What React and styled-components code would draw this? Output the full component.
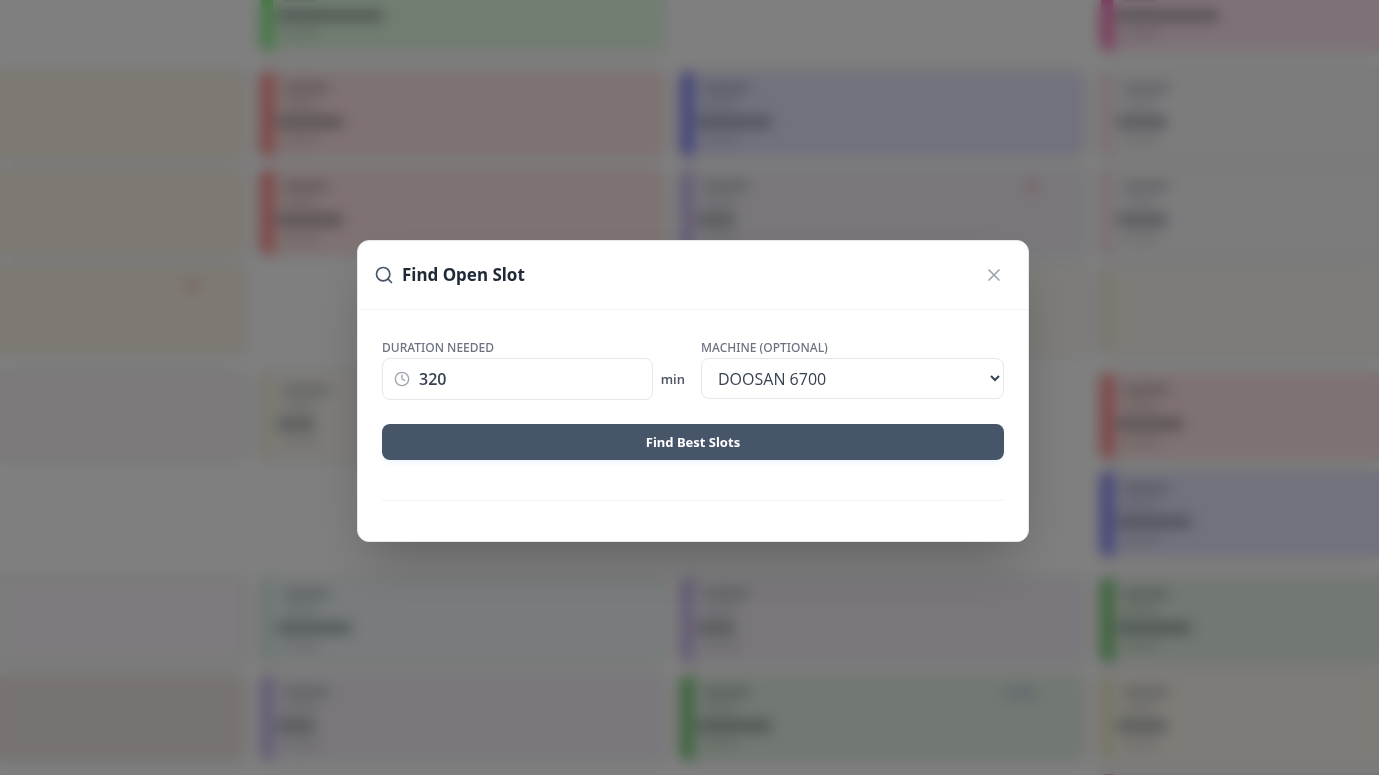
import React from "react";
import styled, { createGlobalStyle } from "styled-components";
import { Search, X, Clock } from "lucide-react";

const GlobalStyle = createGlobalStyle`
  *, *::before, *::after { box-sizing: border-box; }
  body {
    margin: 0;
    background: #ffffff;
    font-family: "Open Sans", "Noto Sans", sans-serif;
  }
`;

const Page = styled.div`
  position: relative;
  height: 100vh;
  overflow: hidden;
`;

/* The schedule behind the dialog, scrolled part of the way right and down. */
const Board = styled.div`
  display: flex;
  gap: 17px;
  margin: -34px 0 0 -159px;
`;

const Lane = styled.div`
  flex: 0 0 403px;
  display: flex;
  flex-direction: column;
  gap: 22px;
`;

const Shift = styled.div`
  display: flex;
  flex-direction: column;
  gap: 14px;
`;

const Card = styled.article`
  height: 84px;
  padding: 12px 28px 0 4px;
  display: flex;
  justify-content: space-between;
  border-radius: 6px;
  background: ${(p) => p.$fill};
  border-left: 12px solid ${(p) => p.$edge};
  box-shadow: 0 0 10px rgba(60, 40, 40, 0.16);
`;

const EmptySlot = styled.div`
  height: 84px;
`;

const Lines = styled.div`
  display: flex;
  flex-direction: column;
  gap: 8px;
`;

const Line = styled.span`
  width: ${(p) => p.$width}px;
  height: ${(p) => (p.$strong ? 12 : 8)}px;
  margin-left: ${(p) => (p.$strong ? 0 : 6)}px;
  background: rgba(40, 50, 60, ${(p) => p.$ink});
`;

const Marker = styled.span`
  width: ${(p) => (p.$wide ? 34 : 12)}px;
  height: 10px;
  margin: 0 18px 0 0;
  border-radius: 6px;
  background: ${(p) => p.$color};
`;

const Overlay = styled.div`
  position: absolute;
  inset: 0;
  display: flex;
  align-items: center;
  justify-content: center;
  padding: 7px 0 0 7px;
  background: rgba(0, 0, 0, 0.5);
  backdrop-filter: blur(7px);
`;

const Dialog = styled.section`
  width: 100%;
  max-width: 672px;
  background: #ffffff;
  border: 1px solid #e5e7eb;
  border-radius: 12px;
  box-shadow: 0 25px 50px -12px rgba(0, 0, 0, 0.25);
`;

const Header = styled.header`
  display: flex;
  align-items: center;
  justify-content: space-between;
  height: 69px;
  padding: 0 16px;
  border-bottom: 1px solid #f3f4f6;
`;

const Title = styled.h2`
  display: flex;
  align-items: center;
  gap: 8px;
  margin: 0;
  font: 700 17px/28px "Noto Sans", "Open Sans", sans-serif;
  color: #1f2937;

  svg { color: #475569; }
`;

const CloseButton = styled.button`
  display: flex;
  padding: 8px;
  border: 0;
  border-radius: 8px;
  background: transparent;
  color: #9ca3af;
  cursor: pointer;
`;

const Form = styled.form`
  padding: 28px 24px 40px;
`;

const Fields = styled.div`
  display: grid;
  grid-template-columns: 1fr 1fr;
  gap: 16px;
  align-items: start;
`;

const Label = styled.label`
  display: block;
  font: 500 12px/20px "Noto Sans", "Open Sans", sans-serif;
  text-transform: uppercase;
  color: #6b7280;
`;

const DurationRow = styled.div`
  display: flex;
  align-items: center;
  gap: 8px;
`;

const InputBox = styled.div`
  flex: 1;
  display: flex;
  align-items: center;
  gap: 9px;
  height: 42px;
  padding: 0 11px;
  border: 1px solid #e5e7eb;
  border-radius: 8px;
  color: #9ca3af;
`;

const NumberInput = styled.input`
  flex: 1;
  min-width: 0;
  padding: 0;
  border: 0;
  outline: 0;
  background: transparent;
  font: 600 16px/24px "Open Sans", "Noto Sans", sans-serif;
  color: #374151;
`;

const Unit = styled.span`
  font-size: 13px;
  line-height: 20px;
  font-weight: 600;
  color: #4b5563;
`;

const MachineSelect = styled.select`
  display: block;
  width: 100%;
  height: 41px;
  padding: 0 0 0 12px;
  border: 1px solid #e5e7eb;
  border-radius: 8px;
  background: #ffffff;
  font: 400 16px/24px "Open Sans", "Noto Sans", sans-serif;
  color: #374151;
`;

const SubmitButton = styled.button`
  display: block;
  width: 100%;
  height: 36px;
  margin-top: 24px;
  border: 0;
  border-radius: 8px;
  background: #475569;
  box-shadow: 0 4px 6px -1px #eff6ff;
  font: 700 13px/20px "Noto Sans", "Open Sans", sans-serif;
  color: #ffffff;
  cursor: pointer;
`;

const Results = styled.div`
  margin-top: 40px;
  border-top: 1px solid #f3f4f6;
`;

const tones = {
  cream: ["#fcf3e4", "#f5e6c8"],
  rose: ["#f8f4f6", "#f6dcec"],
  mist: ["#faf7fa", "#ece0f0"],
  clay: ["#efe6e3", "#d8b0a8"],
  lime: ["#e4fbe4", "#80ee80"],
  red: ["#ffe4e4", "#ff8080"],
  sand: ["#fbf9f3", "#f5eed8"],
  aqua: ["#f0f8f8", "#d8f0ea"],
  violet: ["#f3eff8", "#c6b2ea"],
  blue: ["#e4e4fc", "#7c7cf6"],
  green: ["#e4f2e4", "#6cc46c"],
  pink: ["#fce4f0", "#f46cb4"],
  blush: ["#faf8fb", "#f8e0e6"],
  lemon: ["#fcf9f0", "#f2ecc8"],
};

const card = (tone, title, marker) => ({ tone, title, marker });

const lanes = [
  [
    [null],
    [card("cream"), card("cream"), card("cream", 0, "dot")],
    [card("rose"), null],
    [card("mist"), card("clay"), null],
  ],
  [
    [card("lime", 106, "tag")],
    [card("red", 66), card("red", 66), null],
    [card("sand", 38), null],
    [card("aqua", 74), card("violet", 38), null],
  ],
  [
    [null],
    [card("blue", 74), card("violet", 38, "dot"), card("sand", 38)],
    [null, null],
    [card("violet", 38), card("green", 74, "tag"), null],
  ],
  [
    [card("pink", 102)],
    [card("blush", 50), card("blush", 50), card("sand")],
    [card("red", 66), card("blue", 74)],
    [card("green", 74), card("lemon", 50), card("pink", 66)],
  ],
];

const markerColors = { dot: "#f0b8b8", tag: "#c4d0dc" };

function JobCard({ job }) {
  if (!job) return <EmptySlot />;
  const [fill, edge] = tones[job.tone];
  return (
    <Card $fill={fill} $edge={edge}>
      <Lines>
        {job.title ? (
          <>
            <Line $width={46} $ink={0.3} />
            <Line $width={34} $ink={0.16} />
            <Line $width={job.title} $ink={0.36} $strong />
            <Line $width={36} $ink={0.14} />
          </>
        ) : null}
      </Lines>
      {job.marker ? (
        <Marker $color={markerColors[job.marker]} $wide={job.marker === "tag"} />
      ) : null}
    </Card>
  );
}

export default function App() {
  return (
    <Page>
      <GlobalStyle />
      <Board aria-hidden="true">
        {lanes.map((shifts, lane) => (
          <Lane key={lane}>
            {shifts.map((jobs, shift) => (
              <Shift key={shift}>
                {jobs.map((job, slot) => (
                  <JobCard key={slot} job={job} />
                ))}
              </Shift>
            ))}
          </Lane>
        ))}
      </Board>
      <Overlay>
        <Dialog role="dialog" aria-modal="true" aria-labelledby="slot-title">
          <Header>
            <Title id="slot-title">
              <Search size={20} />
              Find Open Slot
            </Title>
            <CloseButton type="button" aria-label="Close">
              <X size={20} />
            </CloseButton>
          </Header>
          <Form onSubmit={(event) => event.preventDefault()}>
            <Fields>
              <div>
                <Label htmlFor="duration">Duration Needed</Label>
                <DurationRow>
                  <InputBox>
                    <Clock size={16} />
                    <NumberInput id="duration" inputMode="numeric" defaultValue="320" />
                  </InputBox>
                  <Unit>min</Unit>
                </DurationRow>
              </div>
              <div>
                <Label htmlFor="machine">Machine (Optional)</Label>
                <MachineSelect id="machine" defaultValue="DOOSAN 6700">
                  <option>DOOSAN 6700</option>
                </MachineSelect>
              </div>
            </Fields>
            <SubmitButton type="submit">Find Best Slots</SubmitButton>
            <Results />
          </Form>
        </Dialog>
      </Overlay>
    </Page>
  );
}
